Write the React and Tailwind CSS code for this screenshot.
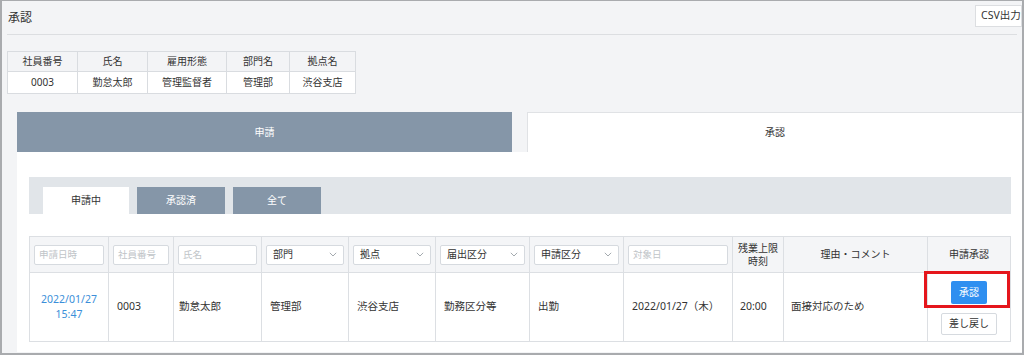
import React from "react";

const font = { fontFamily: '"Noto Sans", "Noto Sans CJK JP", sans-serif' };

function Input({ placeholder }) {
  return (
    <div className="h-[20px] w-full rounded-[2px] border border-[#d6dadf] bg-white px-[4px] text-left text-[9.5px] leading-[18px] text-[#c0c4c8] whitespace-nowrap overflow-hidden">
      {placeholder}
    </div>
  );
}

function Select({ label }) {
  return (
    <div className="flex h-[20px] w-full items-center justify-between rounded-[2px] border border-[#d6dadf] bg-white px-[6px] text-[10px] text-[#333]">
      <span>{label}</span>
      <svg width="8" height="5" viewBox="0 0 8 5" fill="none">
        <path d="M0.8 0.8 L4 4 L7.2 0.8" stroke="#9aa0a6" strokeWidth="0.9" />
      </svg>
    </div>
  );
}

export default function App() {
  const cols = [79, 65, 88, 87, 87, 94, 94, 109, 51, 144, 83];
  const empCols = [70, 70, 79, 63, 66];
  return (
    <div
      className="box-border h-[355px] w-[1024px] overflow-hidden border-x-2 border-t border-b-2 border-[#a9abae] bg-[#f3f4f6] text-[#333]"
      style={font}
    >
      {/* header */}
      <div className="mx-[5px] flex h-[34px] items-start justify-between border-b border-[#dcdee1]">
        <div className="pl-[1px] pt-[8px] text-[12px] text-[#333]">承認</div>
        <div className="mt-[4px] mr-[-5px] flex h-[22px] w-[47px] items-center border border-[#dcdee1] bg-white pl-[5px] text-[10.5px] text-[#333] whitespace-nowrap">
          CSV出力
        </div>
      </div>

      {/* employee table */}
      <table className="ml-[5px] mt-[16px] border-collapse text-[10px] text-[#333]">
        <colgroup>
          {empCols.map((w, i) => (
            <col key={i} style={{ width: w }} />
          ))}
        </colgroup>
        <tbody>
          <tr className="h-[20px] bg-[#f3f4f6]">
            {["社員番号", "氏名", "雇用形態", "部門名", "拠点名"].map((t) => (
              <td key={t} className="border border-[#d9dce0] p-0 text-center">{t}</td>
            ))}
          </tr>
          <tr className="h-[22px] bg-white">
            {["0003", "勤怠太郎", "管理監督者", "管理部", "渋谷支店"].map((t) => (
              <td key={t} className="border border-[#d9dce0] p-0 text-center">{t}</td>
            ))}
          </tr>
        </tbody>
      </table>

      {/* main tabs */}
      <div className="ml-[15px] mt-[18px] flex h-[40px]">
        <div className="flex w-[495px] items-center justify-center bg-[#8596a8] text-[10px] text-white">申請</div>
        <div className="w-[15px]" />
        <div className="flex flex-1 items-center justify-center border-l border-t border-[#e0e2e5] bg-white text-[10px] text-[#333]">承認</div>
      </div>

      {/* panel */}
      <div className="ml-[15px] h-[200px] bg-white pl-[12px] pr-[11px] pt-[25px]">
        <div className="flex h-[37px] items-end gap-[8px] bg-[#e1e5e9] pl-[14px]">
          <div className="flex h-[27px] w-[86px] items-center justify-center bg-white text-[10px] text-[#333]">申請中</div>
          <div className="flex h-[27px] w-[88px] items-center justify-center bg-[#8596a8] text-[10px] text-white">承認済</div>
          <div className="flex h-[27px] w-[88px] items-center justify-center bg-[#8596a8] text-[10px] text-white">全て</div>
        </div>

        <table className="mt-[22px] w-[981px] table-fixed border-collapse text-[10.5px] text-[#333]">
          <colgroup>
            {cols.map((w, i) => (
              <col key={i} style={{ width: w }} />
            ))}
          </colgroup>
          <thead>
            <tr className="h-[36px] bg-[#f4f5f7]">
              <th className="border border-[#dcdfe3] px-[4px] font-normal"><Input placeholder="申請日時" /></th>
              <th className="border border-[#dcdfe3] px-[4px] font-normal"><Input placeholder="社員番号" /></th>
              <th className="border border-[#dcdfe3] px-[4px] font-normal"><Input placeholder="氏名" /></th>
              <th className="border border-[#dcdfe3] px-[4px] font-normal"><Select label="部門" /></th>
              <th className="border border-[#dcdfe3] px-[4px] font-normal"><Select label="拠点" /></th>
              <th className="border border-[#dcdfe3] px-[4px] font-normal"><Select label="届出区分" /></th>
              <th className="border border-[#dcdfe3] px-[4px] font-normal"><Select label="申請区分" /></th>
              <th className="border border-[#dcdfe3] px-[4px] font-normal"><Input placeholder="対象日" /></th>
              <th className="border border-[#dcdfe3] p-0 text-[10px] font-normal leading-[13px]">残業上限<br />時刻</th>
              <th className="border border-[#dcdfe3] p-0 text-[10px] font-normal">理由・コメント</th>
              <th className="border border-[#dcdfe3] p-0 text-[10px] font-normal">申請承認</th>
            </tr>
          </thead>
          <tbody>
            <tr className="h-[69px] bg-white">
              <td className="border border-[#dcdfe3] p-0 text-center leading-[15px] text-[#3c8fd9]">2022/01/27<br />15:47</td>
              <td className="border border-[#dcdfe3] pl-[8px]">0003</td>
              <td className="border border-[#dcdfe3] pl-[5px]">勤怠太郎</td>
              <td className="border border-[#dcdfe3] pl-[8px]">管理部</td>
              <td className="border border-[#dcdfe3] pl-[8px]">渋谷支店</td>
              <td className="border border-[#dcdfe3] pl-[8px]">勤務区分等</td>
              <td className="border border-[#dcdfe3] pl-[8px]">出勤</td>
              <td className="border border-[#dcdfe3] pl-[8px] whitespace-nowrap">2022/01/27（木）</td>
              <td className="border border-[#dcdfe3] pl-[7px]">20:00</td>
              <td className="border border-[#dcdfe3] pl-[7px]">面接対応のため</td>
              <td className="relative border border-[#dcdfe3] p-0">
                <div className="flex flex-col items-center gap-[9px] pt-[1px]">
                  <div className="flex h-[23px] w-[36px] items-center justify-center rounded-[2px] bg-[#2f8ff0] text-[10px] text-white">承認</div>
                  <div className="flex h-[22px] w-[56px] items-center justify-center rounded-[2px] border border-[#d6dadf] bg-white text-[10px] text-[#333]">差し戻し</div>
                </div>
                <div className="absolute left-[-4px] top-[-2px] h-[37px] w-[86px] border-[3px] border-[#e5161c]" />
              </td>
            </tr>
          </tbody>
        </table>
      </div>
    </div>
  );
}
